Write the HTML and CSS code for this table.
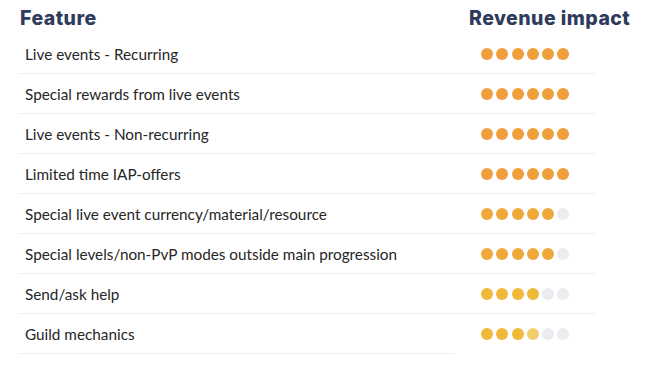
FILE: index.html
```html
<!DOCTYPE html>
<html>
<head>
<meta charset="utf-8">
<link rel="stylesheet" href="styles.css">
</head>
<body>
<div class="wrap">
  <div class="head">
    <div class="h-feature">Feature</div>
    <div class="h-impact">Revenue impact</div>
  </div>
  <div class="rows">
    <div class="row">
      <div class="name">Live events - Recurring</div>
      <div class="dots o"><i></i><i></i><i></i><i></i><i></i><i></i></div>
    </div>
    <div class="row">
      <div class="name">Special rewards from live events</div>
      <div class="dots o"><i></i><i></i><i></i><i></i><i></i><i></i></div>
    </div>
    <div class="row">
      <div class="name">Live events - Non-recurring</div>
      <div class="dots o"><i></i><i></i><i></i><i></i><i></i><i></i></div>
    </div>
    <div class="row">
      <div class="name">Limited time IAP-offers</div>
      <div class="dots o"><i></i><i></i><i></i><i></i><i></i><i></i></div>
    </div>
    <div class="row">
      <div class="name">Special live event currency/material/resource</div>
      <div class="dots m"><i></i><i></i><i></i><i></i><i></i><i class="e"></i></div>
    </div>
    <div class="row">
      <div class="name">Special levels/non-PvP modes outside main progression</div>
      <div class="dots m"><i></i><i></i><i></i><i></i><i></i><i class="e"></i></div>
    </div>
    <div class="row">
      <div class="name">Send/ask help</div>
      <div class="dots y"><i></i><i></i><i></i><i></i><i class="e"></i><i class="e"></i></div>
    </div>
    <div class="row last">
      <div class="name">Guild mechanics</div>
      <div class="dots y"><i></i><i></i><i></i><i class="h"></i><i class="e"></i><i class="e"></i></div>
    </div>
  </div>
</div>
</body>
</html>
```

FILE: styles.css
```css
* { box-sizing: border-box; }
html, body { margin: 0; padding: 0; background: #fff; }
body { font-family: "Lato", "Noto Sans", sans-serif; }
.wrap { width: 669px; height: 365px; }
.head {
  display: flex;
  height: 35px;
  align-items: center;
  color: #2f3b5c;
  font-family: "Inter", "Lato", sans-serif;
  font-weight: 800;
  font-size: 19.5px;
  letter-spacing: 0.45px;
  padding-left: 20px;
}
.h-feature { width: 449px; }
.rows { margin-left: 18px; width: 577px; margin-top: -1px; }
.row { display: grid; grid-template-columns: 437px 140px; height: 40px; }
.row > div { border-bottom: 1.5px solid #efefef; display: flex; align-items: center; }
.row.last .dots { border-bottom-color: transparent; }
.name { padding-left: 7px; font-size: 15.3px; color: #262626; }
.dots { padding-left: 26px; gap: 3.3px; }
.dots i { display: block; width: 12px; height: 12px; border-radius: 50%; }
.o i { background: #ef9e3b; }
.m i { background: #efa93a; }
.y i { background: #f1b93a; }
.dots i.h { background: #f3cd6c; }
.dots i.e { background: #ebecef; }
```
